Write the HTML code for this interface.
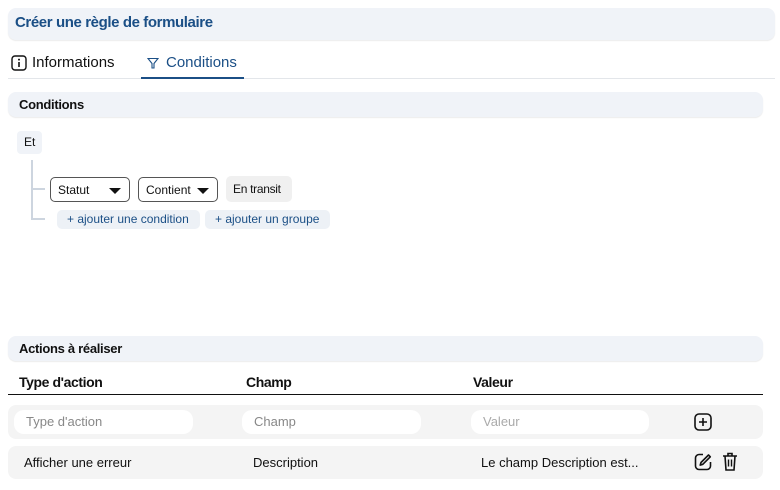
<!DOCTYPE html>
<html><head><meta charset="utf-8"><style>
*{box-sizing:border-box;margin:0;padding:0}
body{width:780px;height:490px;background:#fff;font-family:"Liberation Sans",sans-serif;position:relative;overflow:hidden;color:#111}
.a{position:absolute;white-space:nowrap}
.bar{background:#f0f3f8;border-radius:8px;box-shadow:0 1px 1px rgba(0,0,0,.08)}
.sel{border:1px solid #555;border-radius:5px;font-size:12px;height:25px;top:177px;padding:5px 7px;background:#fff}
.sel:after{content:"";position:absolute;right:8px;top:10px;border-left:6px solid transparent;border-right:6px solid transparent;border-top:6px solid #111}
.btn{background:#edf1f6;border-radius:5px;color:#1b4f86;font-size:12px;height:19px;top:210px;padding:2px 10px}
.th{font-size:14px;font-weight:bold;top:374px;letter-spacing:-.4px}
.row{left:8px;width:755px;background:#f4f4f4;border-radius:8px}
.in{background:#fff;border-radius:10px;top:410px;height:24px;font-size:13px;color:#888;padding:4px 12px}
.td{font-size:13px;top:455px;color:#111}
</style></head><body>
<div class="a bar" style="left:8px;top:8px;width:767px;height:32px"></div>
<div class="a" style="left:15px;top:14px;font-size:15px;font-weight:bold;color:#1b4f86;letter-spacing:-.4px">Créer une règle de formulaire</div>
<svg class="a" style="left:11px;top:55px" width="16" height="16" viewBox="0 0 16 16"><rect x="1" y="1" width="14" height="14" rx="3" fill="none" stroke="#111" stroke-width="1.4"/><path d="M8 7v5" stroke="#111" stroke-width="1.6"/><circle cx="8" cy="4.6" r="1" fill="#111"/></svg>
<div class="a" style="left:32px;top:54px;font-size:15px">Informations</div>
<svg class="a" style="left:147px;top:57px" width="12" height="12" viewBox="0 0 12 12"><path d="M1 1.5h10L7 6.5V11H5V6.5z" fill="none" stroke="#1b4f86" stroke-width="1.1"/></svg>
<div class="a" style="left:166px;top:54px;font-size:15px;color:#1b4f86">Conditions</div>
<div class="a" style="left:8px;top:78px;width:767px;height:1px;background:#e3e6ea"></div>
<div class="a" style="left:141px;top:77px;width:103px;height:2px;background:#1b4f86"></div>
<div class="a bar" style="left:8px;top:92px;width:755px;height:25px"></div>
<div class="a" style="left:19px;top:97px;font-size:13px;font-weight:bold;letter-spacing:-.3px">Conditions</div>
<div class="a" style="left:17px;top:131px;width:25px;height:23px;background:#f0f3f8;border-radius:4px;font-size:12px;padding:4px 7px">Et</div>
<div class="a" style="left:31px;top:160px;width:2px;height:60px;background:#cdd5df"></div>
<div class="a" style="left:31px;top:188px;width:14px;height:2px;background:#cdd5df"></div>
<div class="a" style="left:31px;top:218px;width:14px;height:2px;background:#cdd5df"></div>
<div class="a sel" style="left:50px;width:80px">Statut</div>
<div class="a sel" style="left:138px;width:80px">Contient</div>
<div class="a" style="left:226px;top:176px;width:66px;height:26px;background:#f0f0f0;border-radius:5px;font-size:12px;padding:6px 7px;letter-spacing:-.3px">En transit</div>
<div class="a btn" style="left:57px;width:143px">+ ajouter une condition</div>
<div class="a btn" style="left:205px;width:125px">+ ajouter un groupe</div>
<div class="a bar" style="left:8px;top:336px;width:755px;height:25px"></div>
<div class="a" style="left:19px;top:341px;font-size:13px;font-weight:bold;letter-spacing:-.3px">Actions à réaliser</div>
<div class="a th" style="left:19px">Type d'action</div>
<div class="a th" style="left:246px">Champ</div>
<div class="a th" style="left:473px">Valeur</div>
<div class="a" style="left:8px;top:394px;width:755px;height:1px;background:#111"></div>
<div class="a row" style="top:405px;height:34px"></div>
<div class="a in" style="left:14px;width:179px">Type d'action</div>
<div class="a in" style="left:242px;width:179px">Champ</div>
<div class="a in" style="left:471px;width:178px;color:#aaa">Valeur</div>
<svg class="a" style="left:693px;top:412px" width="20" height="20" viewBox="0 0 20 20"><rect x="2" y="2" width="16" height="16" rx="4" fill="none" stroke="#111" stroke-width="1.6"/><path d="M10 6v8M6 10h8" stroke="#111" stroke-width="1.6"/></svg>
<div class="a row" style="top:446px;height:33px"></div>
<div class="a td" style="left:24px">Afficher une erreur</div>
<div class="a td" style="left:253px">Description</div>
<div class="a td" style="left:481px">Le champ Description est...</div>
<svg class="a" style="left:693px;top:452px" width="20" height="20" viewBox="0 0 20 20"><path d="M10 2.5H6a3.5 3.5 0 0 0-3.5 3.5v8A3.5 3.5 0 0 0 6 17.5h8a3.5 3.5 0 0 0 3.5-3.5v-4" fill="none" stroke="#111" stroke-width="1.6"/><path d="M15.5 3l1.8 1.8-7.5 7.5-2.6.8.8-2.6z" fill="none" stroke="#111" stroke-width="1.6" stroke-linejoin="round"/></svg>
<svg class="a" style="left:721px;top:451px" width="18" height="21" viewBox="0 0 18 21"><path d="M2 5h14M7 5V2.5h4V5M4 5l1 14h8l1-14" fill="none" stroke="#111" stroke-width="1.6"/><path d="M7.5 8.5v7M10.5 8.5v7" stroke="#111" stroke-width="1.4"/></svg>
</body></html>
